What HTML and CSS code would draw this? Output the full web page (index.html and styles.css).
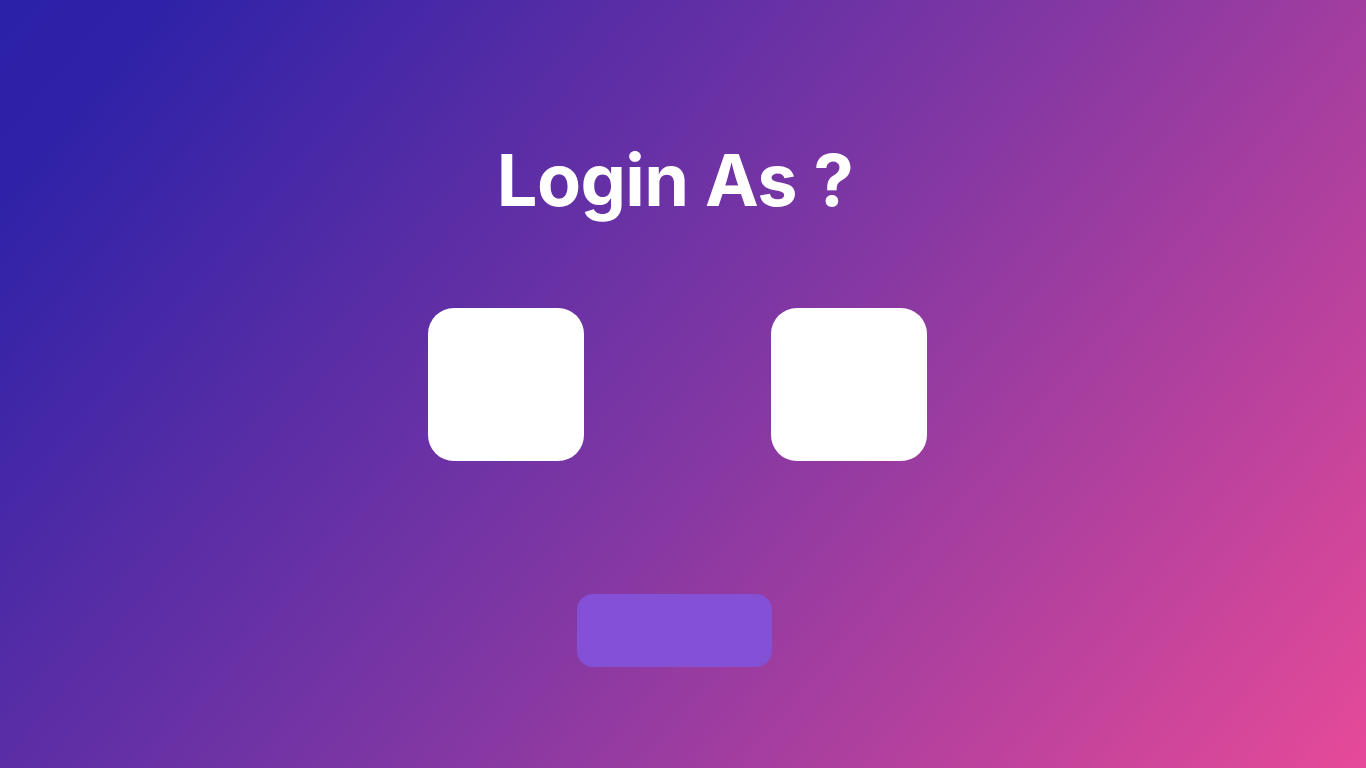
FILE: index.html
```html
<!DOCTYPE html>
<html lang="en">
<head>
<meta charset="utf-8">
<title>Login As</title>
<link rel="stylesheet" href="styles.css">
</head>
<body>
<main class="page">
  <h1 class="title">Login As ?</h1>
  <div class="choices">
    <div class="choice"></div>
    <div class="choice"></div>
  </div>
  <button class="submit" type="button"></button>
</main>
</body>
</html>
```
FILE: styles.css
```css
html, body {
  margin: 0;
  padding: 0;
  height: 100%;
}
body {
  background: linear-gradient(130deg, #2b20a8 0%, #2e22a8 8%, #7c36a4 50%, #e64a98 100%);
  font-family: "Inter", "Open Sans", sans-serif;
  overflow: hidden;
}
.page {
  height: 768px;
  display: flex;
  flex-direction: column;
  align-items: center;
  box-sizing: border-box;
  padding-top: 140px;
}
.title {
  margin: 0;
  color: #ffffff;
  font-size: 72px;
  font-weight: 700;
  line-height: 80px;
  letter-spacing: -0.6px;
  height: 80px;
  transform: translateX(-8px);
}
.choices {
  display: flex;
  gap: 187px;
  margin-top: 88px;
  transform: translateX(-6px);
}
.choice {
  width: 156px;
  height: 153px;
  background: #ffffff;
  border-radius: 26px;
}
.submit {
  margin-top: 133px;
  width: 195px;
  height: 73px;
  border: none;
  border-radius: 16px;
  background: #8350d6;
  transform: translateX(-9px);
  padding: 0;
}
```
